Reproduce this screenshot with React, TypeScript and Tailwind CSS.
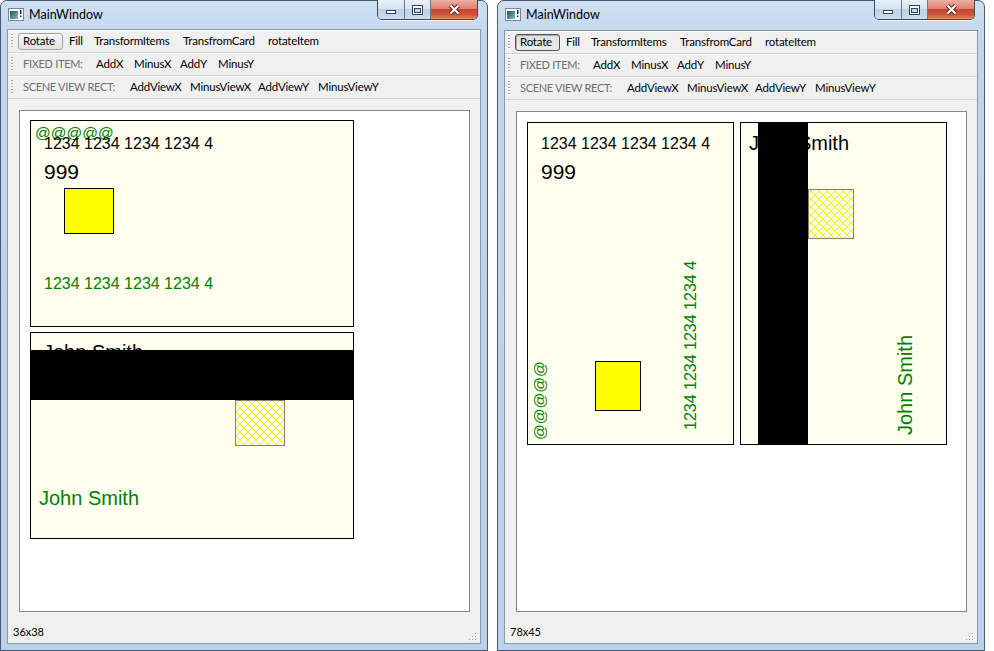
import type { ReactNode } from "react";

const cardFont = "font-['Liberation_Sans',Arial,sans-serif]";
const hatch =
  "bg-[#fffff0] bg-[image:repeating-linear-gradient(45deg,#f5f500_0_1px,transparent_1px_5.66px),repeating-linear-gradient(-45deg,#f5f500_0_1px,transparent_1px_5.66px)]";

function TitleIcon() {
  return (
    <svg width="16" height="13" viewBox="0 0 16 13" className="mt-[7px] ml-px shrink-0">
      <defs>
        <linearGradient id="ti" x1="0" y1="0" x2="1" y2="1">
          <stop offset="0" stopColor="#1f4f5c" />
          <stop offset="1" stopColor="#7fc0c8" />
        </linearGradient>
      </defs>
      <rect x="0.5" y="0.5" width="15" height="12" fill="#fff" stroke="#7a8694" />
      <rect x="2" y="3" width="8" height="8" fill="url(#ti)" />
      <rect x="12" y="2" width="1.5" height="4" fill="#2b2b2b" />
      <rect x="12" y="7.5" width="1.5" height="1.5" fill="#2b2b2b" />
    </svg>
  );
}

function CaptionButtons() {
  const glass =
    "bg-[linear-gradient(180deg,#e9f0f8_0%,#d6e3f2_45%,#bfd1e7_50%,#cddcee_100%)]";
  return (
    <div className="-mt-px mr-[3px] ml-auto flex h-[20px] overflow-hidden rounded-b-[5px] border border-t-0 border-[#3b4a5c] shadow-[0_1px_0_rgba(255,255,255,0.7)]">
      <div className={`flex w-[27px] items-end justify-center border-r border-[#6a7a8c] pb-[5px] ${glass}`}>
        <svg width="10" height="4" viewBox="0 0 10 4">
          <rect x="0.5" y="0.5" width="9" height="3" fill="#fff" stroke="#34435a" />
        </svg>
      </div>
      <div className={`flex w-[26px] items-center justify-center border-r border-[#6a7a8c] ${glass}`}>
        <svg width="11" height="10" viewBox="0 0 11 10">
          <rect x="0.5" y="0.5" width="10" height="9" fill="#fff" stroke="#34435a" />
          <rect x="2.5" y="3.5" width="6" height="4" fill="#c7d6e8" stroke="#34435a" />
        </svg>
      </div>
      <div className="flex w-[46px] items-center justify-center bg-[linear-gradient(180deg,#eab0a2_0%,#dd8170_45%,#c8442c_50%,#cf5a40_80%,#e38b6d_100%)]">
        <svg width="13" height="11" viewBox="0 0 13 11">
          <path d="M2.5 1.5 L10.5 9.5 M10.5 1.5 L2.5 9.5" stroke="#5a2118" strokeWidth="4.2" />
          <path d="M2.5 1.5 L10.5 9.5 M10.5 1.5 L2.5 9.5" stroke="#fff" strokeWidth="2.2" />
        </svg>
      </div>
    </div>
  );
}

function Grip() {
  return (
    <span className="h-[15px] w-[2px] shrink-0 bg-[repeating-linear-gradient(180deg,#a4a4a4_0_1px,#ffffff_1px_2px,transparent_2px_3px)]" />
  );
}

function ToolRow({ children }: { children: ReactNode }) {
  return (
    <div className="flex h-[23px] shrink-0 items-center border-b border-[#d0d0d0] pl-[3px] shadow-[inset_0_1px_0_#ffffff] whitespace-nowrap">
      <Grip />
      {children}
    </div>
  );
}

function SizeGrip() {
  const dots = [
    [8, 2],
    [5, 5],
    [8, 5],
    [2, 8],
    [5, 8],
    [8, 8],
  ];
  return (
    <svg width="10" height="10" viewBox="0 0 10 10" className="absolute right-[2px] bottom-px">
      {dots.map(([x, y]) => (
        <g key={`${x}-${y}`}>
          <rect x={x} y={y} width="1" height="1" fill="#ffffff" />
          <rect x={x - 1} y={y - 1} width="1" height="1" fill="#9c9c9c" />
        </g>
      ))}
    </svg>
  );
}

function Window({
  titleClass,
  pressed,
  status,
  children,
}: {
  titleClass: string;
  pressed?: boolean;
  status: string;
  children: ReactNode;
}) {
  const label = "ml-[10px] text-[11px] tracking-[-0.3px] text-[#6e6e6e]";

  return (
    <div className="flex h-[651px] w-[488px] shrink-0 flex-col rounded-t-[7px] border border-[#4a596b] bg-[linear-gradient(180deg,#cfe0f3_0%,#c0d6ee_40px,#b9d1eb_100%)] px-[6px] pb-[6px] font-['Lato',sans-serif]">
      <div className={`flex shrink-0 items-start ${titleClass}`}>
        <TitleIcon />
        <span className="ml-[5px] text-[12.5px] leading-[28px] text-black">MainWindow</span>
        <CaptionButtons />
      </div>

      <div className="flex flex-1 flex-col border border-[#8b97a5] bg-[#f0f0f0] text-[11.5px] tracking-[-0.2px] text-black">
        <ToolRow>
          <span
            className={
              pressed
                ? "ml-[5px] flex h-[17px] w-[45px] items-center rounded-[3px] border border-[#4f4f4f] bg-[linear-gradient(180deg,#e2e2e2,#ececec)] pl-[4px] shadow-[inset_1px_1px_1px_rgba(0,0,0,0.25)]"
                : "ml-[5px] flex h-[17px] w-[45px] items-center rounded-[3px] border border-[#a2a2a2] bg-[linear-gradient(180deg,#f6f6f6,#e4e4e4)] pl-[4px]"
            }
          >
            Rotate
          </span>
          <span className="w-[25px] pl-[6px]">Fill</span>
          <span className="w-[89px] pl-[6px]">TransformItems</span>
          <span className="w-[85px] pl-[6px]">TransfromCard</span>
          <span className="pl-[6px]">rotateItem</span>
        </ToolRow>
        <ToolRow>
          <span className={`w-[73px] ${label}`}>FIXED ITEM:</span>
          <span className="w-[38px]">AddX</span>
          <span className="w-[46px]">MinusX</span>
          <span className="w-[38px]">AddY</span>
          <span>MinusY</span>
        </ToolRow>
        <ToolRow>
          <span className={`w-[107px] ${label}`}>SCENE VIEW RECT:</span>
          <span className="w-[60px]">AddViewX</span>
          <span className="w-[68px]">MinusViewX</span>
          <span className="w-[60px]">AddViewY</span>
          <span>MinusViewY</span>
        </ToolRow>

        <div className="flex flex-1 flex-col pt-[11px] pr-[10px] pb-[9px] pl-[11px]">
          <div className={`flex-1 border border-[#828790] bg-white tracking-normal ${cardFont}`}>{children}</div>
        </div>

        <div className="relative flex h-[22px] shrink-0 items-center pl-[5px] text-[11px] tracking-normal">
          {status}
          <SizeGrip />
        </div>
      </div>
    </div>
  );
}

function Card({ size, children }: { size: string; children: ReactNode }) {
  return <div className={`relative shrink-0 border border-black bg-[#fffff0] ${size}`}>{children}</div>;
}

const line = "absolute whitespace-nowrap leading-none";
const digits = "1234 1234 1234 1234 4";

export default function App() {
  return (
    <div className="flex h-[651px] w-[994px] gap-[9px] overflow-hidden bg-white">
      <Window titleClass="h-[28px]" status="36x38">
        <div className="flex flex-col gap-[5px] pt-[9px] pl-[10px]">
          <Card size="h-[207px] w-[324px]">
            <span className={`${line} top-[4px] left-[4px] text-[15.5px] text-[#008000]`}>@@@@@</span>
            <span className={`${line} top-[15px] left-[13px] text-[16px] text-black`}>{digits}</span>
            <span className={`${line} top-[40px] left-[13px] text-[21px] text-black`}>999</span>
            <div className="absolute top-[67px] left-[33px] h-[46px] w-[50px] border border-black bg-[#ffff00]" />
            <span className={`${line} top-[155px] left-[13px] text-[16px] text-[#008000]`}>{digits}</span>
          </Card>
          <Card size="h-[207px] w-[324px]">
            <span className={`${line} top-[9px] left-[12px] text-[20px] text-black`}>John Smith</span>
            <div className="absolute top-[17px] right-0 left-0 h-[50px] bg-black" />
            <div className={`absolute top-[67px] left-[204px] h-[46px] w-[50px] border border-[#808080] ${hatch}`} />
            <span className={`${line} top-[155px] left-[8px] text-[20px] text-[#008000]`}>John Smith</span>
          </Card>
        </div>
      </Window>

      <Window titleClass="h-[29px]" status="78x45" pressed>
        <div className="flex gap-[6px] pt-[10px] pl-[10px]">
          <Card size="h-[323px] w-[207px]">
            <span className={`${line} top-[13px] left-[13px] text-[16px] text-black`}>{digits}</span>
            <span className={`${line} top-[38px] left-[13px] text-[21px] text-black`}>999</span>
            <div className="absolute top-[238px] left-[67px] h-[50px] w-[46px] border border-black bg-[#ffff00]" />
            <span className={`${line} top-[317px] left-[4px] origin-top-left -rotate-90 text-[15.5px] text-[#008000]`}>
              @@@@@
            </span>
            <span className={`${line} top-[307px] left-[155px] origin-top-left -rotate-90 text-[16px] text-[#008000]`}>
              {digits}
            </span>
          </Card>
          <Card size="h-[323px] w-[207px]">
            <span className={`${line} top-[10px] left-[8px] text-[20px] text-black`}>John Smith</span>
            <div className="absolute top-0 bottom-0 left-[17px] w-[50px] bg-black" />
            <div className={`absolute top-[66px] left-[67px] h-[50px] w-[46px] border border-[#808080] ${hatch}`} />
            <span className={`${line} top-[312px] left-[154px] origin-top-left -rotate-90 text-[20px] text-[#008000]`}>
              John Smith
            </span>
          </Card>
        </div>
      </Window>
    </div>
  );
}
